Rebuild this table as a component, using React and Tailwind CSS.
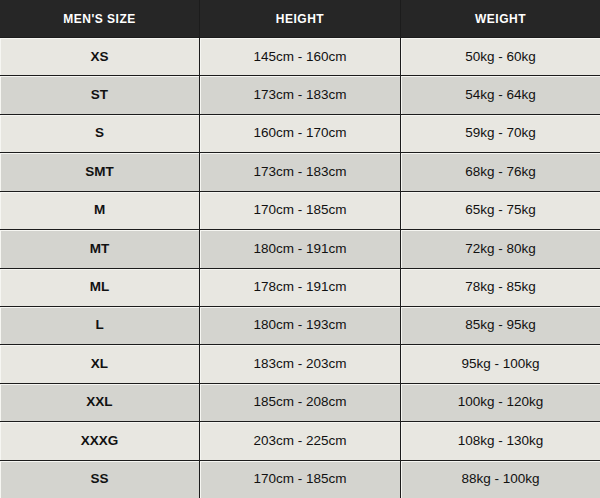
import React from 'react';

// talla, altura, peso
const filas = [
  ['XS', '145cm - 160cm', '50kg - 60kg'],
  ['ST', '173cm - 183cm', '54kg - 64kg'],
  ['S', '160cm - 170cm', '59kg - 70kg'],
  ['SMT', '173cm - 183cm', '68kg - 76kg'],
  ['M', '170cm - 185cm', '65kg - 75kg'],
  ['MT', '180cm - 191cm', '72kg - 80kg'],
  ['ML', '178cm - 191cm', '78kg - 85kg'],
  ['L', '180cm - 193cm', '85kg - 95kg'],
  ['XL', '183cm - 203cm', '95kg - 100kg'],
  ['XXL', '185cm - 208cm', '100kg - 120kg'],
  ['XXXG', '203cm - 225cm', '108kg - 130kg'],
  ['SS', '170cm - 185cm', '88kg - 100kg'],
];

const App = () => {
  return (
    <div className="w-[600px] h-[498px] bg-[#1c1c1c] overflow-hidden" style={{ fontFamily: '"Liberation Sans", Arial, sans-serif' }}>
      <div className="grid grid-cols-[199px_200px_1fr] grid-rows-[37px_repeat(12,1fr)] h-[498px] gap-x-[1px] gap-y-[1px]">
        {/* Cabecera */}
        {["MEN'S SIZE", 'HEIGHT', 'WEIGHT'].map((t) => (
          <div key={t} className="bg-[#262626] text-white font-bold text-[12px] tracking-[0.5px] flex items-center justify-center">
            {t}
          </div>
        ))}

        {filas.map((fila, i) => {
          const fondo = i % 2 === 0 ? 'bg-[#e8e7e1]' : 'bg-[#d4d4cf]';
          return fila.map((celda, j) => (
            <div
              key={i + '-' + j}
              className={`${fondo} shadow-[inset_1px_1px_0_#f6f6f2] flex items-center justify-center text-[13.5px] text-[#111] ${j === 0 ? 'font-bold' : ''}`}
            >
              {celda}
            </div>
          ));
        })}
      </div>
    </div>
  );
};

export default App;
